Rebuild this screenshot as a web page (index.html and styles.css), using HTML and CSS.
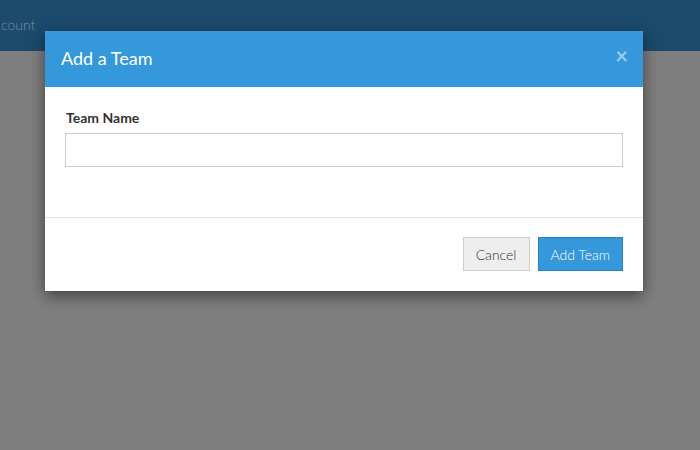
FILE: index.html
```html
<!DOCTYPE html>
<html lang="en">
<head>
    <meta charset="UTF-8">
    <title>Add a Team</title>
    <link rel="stylesheet" href="styles.css">
</head>
<body>
    <div class="navbar">
        <span class="nav-link">count</span>
    </div>

    <div class="modal">
        <div class="modal-header">
            <h4>Add a Team</h4>
            <span class="close">&times;</span>
        </div>
        <div class="modal-body">
            <label for="teamName">Team Name</label>
            <input type="text" id="teamName">
        </div>
        <div class="modal-footer">
            <button class="btn btn-default">Cancel</button>
            <button class="btn btn-primary">Add Team</button>
        </div>
    </div>
</body>
</html>
```

FILE: styles.css
```css
body {
    margin: 0;
    font-family: 'Lato', sans-serif;
    background: #7f7f7f;
    height: 450px;
    overflow: hidden;
}
.navbar {
    height: 51px;
    background: #1c4b6e;
    display: flex;
    align-items: center;
}
.nav-link {
    margin-left: 1px;
    margin-top: -3px;
    font-size: 14px;
    color: #7590a5;
    font-weight: 300;
}
.modal {
    position: absolute;
    top: 31px;
    left: 45px;
    width: 598px;
    background: white;
    box-shadow: 0 5px 15px rgba(0, 0, 0, 0.5);
}
.modal-header {
    background: #3498db;
    height: 56px;
    padding: 0 16px;
    display: flex;
    align-items: center;
    justify-content: space-between;
}
.modal-header h4 {
    margin: -2px 0 0 0;
    color: white;
    font-size: 18px;
    font-weight: 400;
}
.close {
    color: #9ccbed;
    font-size: 22px;
    font-weight: bold;
    line-height: 1;
    margin-top: -7px;
    margin-right: -1px;
}
.modal-body {
    padding: 21px 20px 50px 20px;
}
.modal-body label {
    display: block;
    font-size: 14px;
    font-weight: bold;
    color: #333;
    margin: 0 0 5px 1px;
    line-height: 20px;
}
.modal-body input {
    box-sizing: border-box;
    width: 100%;
    height: 34px;
    border: 1px solid #ccc;
    margin: 0;
}
.modal-footer {
    border-top: 1px solid #e5e5e5;
    padding: 19px 20px 20px 20px;
    display: flex;
    justify-content: flex-end;
    gap: 8px;
}
.btn {
    height: 34px;
    padding: 0 12px;
    font-family: 'Lato', sans-serif;
    font-size: 14px;
    font-weight: 300;
    border: 1px solid;
}
.btn-default {
    background: #eeeeee;
    border-color: #cccccc;
    color: #333;
    padding: 0 13px 0 12px;
}
.btn-primary {
    background: #3498db;
    border-color: #2a80b9;
    color: white;
    padding: 0 12px 0 11px;
}
```
